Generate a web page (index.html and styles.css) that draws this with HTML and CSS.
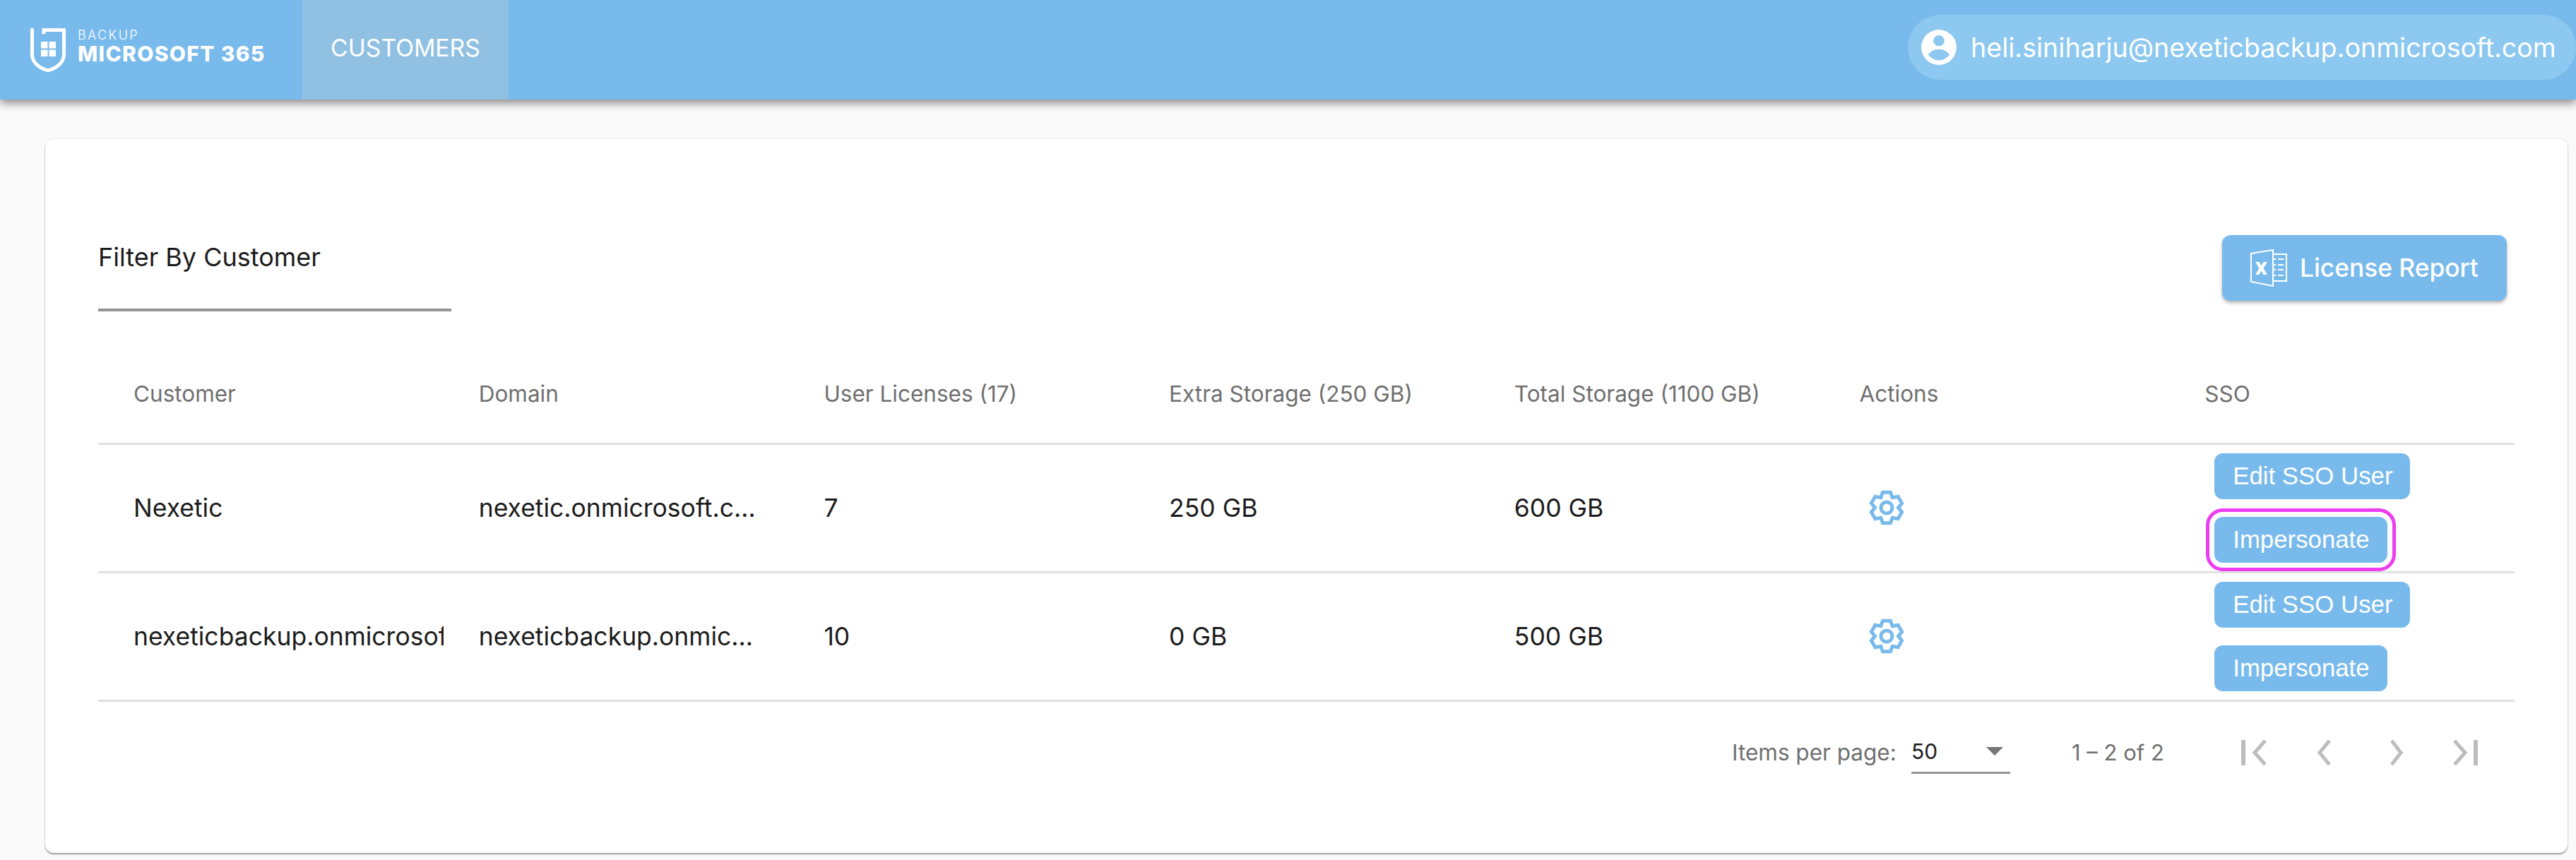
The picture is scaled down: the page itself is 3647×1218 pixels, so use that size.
FILE: index.html
```html
<!DOCTYPE html>
<html lang="en">
<head>
<meta charset="utf-8">
<title>Backup Microsoft 365 - Customers</title>
<link rel="stylesheet" href="styles.css">
</head>
<body>
<header class="topbar">
  <div class="brand">
    <svg class="shield" viewBox="0 0 52 62" aria-hidden="true">
      <path d="M3.500 0V37C3.500 46 10 55 26 60C42 55 48.500 46 48.500 37V2.500H20V8" fill="none" stroke="#fff" stroke-width="5"/>
      <path d="M16 19h9.500v9.500H16zM27.500 19H37v9.500h-9.500zM16 30.500h9.500V40H16zM27.500 30.500H37V40h-9.500z" fill="#fff"/>
    </svg>
    <div class="brand-text">
      <span class="brand-small">BACKUP</span>
      <span class="brand-big">MICROSOFT 365</span>
    </div>
  </div>
  <nav class="tab">CUSTOMERS</nav>
  <div class="user">
    <svg class="user-icon" viewBox="0 0 24 24" aria-hidden="true"><path fill="#fff" fill-rule="evenodd" d="M12 0a12 12 0 1 1 0 24a12 12 0 0 1 0-24zm0 3.800a3.700 3.700 0 1 0 0 7.400a3.700 3.700 0 0 0 0-7.400zM12 13.300c-2.900 0-5.500 1.300-7.200 3.700c1.700 2.400 4.300 3.800 7.200 3.800s5.500-1.400 7.200-3.800c-1.700-2.400-4.300-3.700-7.200-3.700z"/></svg>
    <span>heli.siniharju@nexeticbackup.onmicrosoft.com</span>
  </div>
</header>
<main class="card">
  <div class="toolbar">
    <div class="filter">Filter By Customer</div>
    <button class="report">
      <svg class="xls" viewBox="0 0 52 53" aria-hidden="true">
        <path d="M1 6L32 1V52L1 46Z" fill="none" stroke="#fff" stroke-width="2"/>
        <path d="M32 7H51V45H32" fill="none" stroke="#fff" stroke-width="2"/>
        <path d="M32 14h4M39 14h8M32 22h4M39 22h8M32 29h4M39 29h8M32 37h4M39 37h8" stroke="#fff" stroke-width="2"/>
        <path d="M7 18h5.500l3 5.500l3-5.500H24l-5.500 9l5.500 9h-5.500l-3-5.500l-3 5.500H7l5.500-9z" fill="#fff"/>
      </svg>
      <span>License Report</span>
    </button>
  </div>
  <table class="grid">
    <thead>
      <tr>
        <th>Customer</th><th>Domain</th><th>User Licenses (17)</th><th>Extra Storage (250 GB)</th><th>Total Storage (1100 GB)</th><th>Actions</th><th>SSO</th>
      </tr>
    </thead>
    <tbody>
      <tr>
        <td><div class="clip">Nexetic</div></td>
        <td><div class="ellipsis">nexetic.onmicrosoft.com</div></td>
        <td>7</td><td>250 GB</td><td>600 GB</td>
        <td><svg class="gear" viewBox="0 0 50 50" aria-hidden="true"><use href="#gear"/></svg></td>
        <td class="sso"><button class="btn">Edit SSO User</button><button class="btn ringed">Impersonate</button></td>
      </tr>
      <tr>
        <td><div class="clip">nexeticbackup.onmicrosoft.com</div></td>
        <td><div class="ellipsis">nexeticbackup.onmicrosoft.com</div></td>
        <td>10</td><td>0 GB</td><td>500 GB</td>
        <td><svg class="gear" viewBox="0 0 50 50" aria-hidden="true"><use href="#gear"/></svg></td>
        <td class="sso"><button class="btn">Edit SSO User</button><button class="btn">Impersonate</button></td>
      </tr>
    </tbody>
  </table>
  <footer class="pager">
    <span class="pager-label">Items per page:</span>
    <div class="select"><span>50</span><i class="caret"></i></div>
    <span class="range">1 – 2 of 2</span>
    <div class="pg-group">
      <svg class="pg" viewBox="0 0 40 36" aria-hidden="true"><path d="M4 0V36" stroke-width="6"/><path d="M35 1L20 18L35 35" stroke-width="5"/></svg>
      <svg class="pg" viewBox="0 0 40 36" aria-hidden="true"><path d="M26 1L12 18L26 35" stroke-width="5"/></svg>
      <svg class="pg" viewBox="0 0 40 36" aria-hidden="true"><path d="M14 1L27 18L14 35" stroke-width="5"/></svg>
      <svg class="pg" viewBox="0 0 40 36" aria-hidden="true"><path d="M33 0V36" stroke-width="6"/><path d="M3 1L18 18L3 35" stroke-width="5"/></svg>
    </div>
  </footer>
</main>
<svg class="defs" aria-hidden="true">
  <symbol id="gear" viewBox="0 0 50 50">
    <path fill="none" stroke="#78baec" stroke-width="5" stroke-linejoin="miter" d="M19.560 3.170H30.440L33.250 10.710L41.180 9.360L46.630 18.800L41.500 25L46.630 31.200L41.180 40.640L33.250 39.290L30.440 46.830H19.560L16.750 39.290L8.820 40.640L3.370 31.200L8.500 25L3.370 18.800L8.820 9.360L16.750 10.710Z"/>
    <circle cx="25" cy="25" r="8" fill="none" stroke="#78baec" stroke-width="5"/>
  </symbol>
</svg>
</body>
</html>
```

FILE: styles.css
```css
* { box-sizing: border-box; }
html, body { margin: 0; height: 100%; }
body {
  background: #fafafa;
  font-family: "Inter", "Noto Sans", sans-serif;
  color: #1b1b1b;
  overflow: hidden;
}
.topbar {
  height: 141px;
  background: #78baec;
  display: flex;
  align-items: stretch;
  box-shadow: 0 5px 12px rgba(0,0,0,.45);
  position: relative;
  color: #fff;
}
.brand {
  width: 428px;
  padding-left: 42px;
  display: flex;
  align-items: center;
  gap: 16px;
}
.shield { width: 52px; height: 62px; display: block; }
.brand-text { display: flex; flex-direction: column; line-height: 1; margin-top: -10px; }
.brand-small { font-size: 18px; font-weight: 300; letter-spacing: 2.400px; }
.brand-big { font-size: 30px; font-weight: 800; letter-spacing: 1.300px; margin-top: 2px; white-space: nowrap; }
.tab {
  width: 292px;
  background: #90c0e2;
  display: flex;
  align-items: center;
  justify-content: center;
  font-size: 33.700px;
  font-weight: 400;
  padding-bottom: 6px;
}
.user {
  margin-left: auto;
  margin-top: 21px;
  height: 92px;
  width: 946px;
  background: #8cc8ef;
  border-radius: 46px;
  display: flex;
  align-items: center;
  padding-left: 19px;
  gap: 20px;
  font-size: 37.600px;
  white-space: nowrap;
}
.user-icon { width: 50px; height: 50px; flex: none; }
.card {
  margin: 56px 12px 0 64px;
  height: 1011px;
  background: #fff;
  border-radius: 12px;
  box-shadow: 0 2px 2px rgba(0,0,0,.35), 0 0 3px rgba(0,0,0,.12);
  padding: 136px 75px 0;
}
.toolbar {
  display: flex;
  justify-content: space-between;
  align-items: flex-start;
  height: 159px;
}
.filter {
  width: 500px;
  height: 102px;
  border-bottom: 4px solid #949494;
  font-size: 36px;
  line-height: 50px;
  margin-top: 6px;
}
.report {
  width: 403px;
  height: 93px;
  margin-right: 11px;
  background: #78baec;
  color: #fff;
  border: 0;
  border-radius: 12px;
  box-shadow: 0 3px 5px rgba(0,0,0,.3);
  display: flex;
  align-items: center;
  gap: 18px;
  padding: 0 0 0 40px;
  font: 500 35.300px "Inter", sans-serif;
}
.xls { width: 52px; height: 53px; flex: none; }
.grid {
  border-collapse: collapse;
  table-layout: fixed;
  width: 3421px;
}
.grid th, .grid td { text-align: left; padding: 0 0 0 50px; border-bottom: 3px solid #e0e0e0; }
.grid th {
  font-size: 31.500px;
  font-weight: 400;
  color: #6f6f6f;
  height: 136px;
  padding-bottom: 4px;
}
.grid td { font-size: 35.500px; height: 182px; }
.grid td:first-child .clip { width: 439px; overflow: hidden; white-space: nowrap; }
.ellipsis { width: 398px; overflow: hidden; white-space: nowrap; text-overflow: ellipsis; }
.gear { width: 50px; height: 50px; display: block; margin-left: 13px; }
.defs { position: absolute; width: 0; height: 0; }
.grid td.sso { padding-left: 64px; }
.sso .btn { display: block; }
.btn {
  height: 65px;
  padding: 0 25px 0 26px;
  background: #78baec;
  color: #fff;
  border: 0;
  border-radius: 12px;
  font: 34.800px "Liberation Sans", Arial, sans-serif;
}
.btn + .btn { margin-top: 25px; }
.ringed { outline: 5px solid #ec3ef0; outline-offset: 7px; }
.pager {
  margin-top: 42px;
  padding-right: 48px;
  display: flex;
  justify-content: flex-end;
  align-items: center;
  height: 60px;
  font-size: 31px;
  color: #6f6f6f;
}
.pager-label { width: 254px; font-size: 31.500px; white-space: nowrap; }
.select {
  width: 140px;
  height: 60px;
  display: flex;
  align-items: center;
  justify-content: space-between;
  border-bottom: 3px solid #949494;
  color: #1b1b1b;
  font-size: 30px;
  padding-right: 10px;
}
.caret {
  width: 0; height: 0;
  border-left: 12px solid transparent;
  border-right: 12px solid transparent;
  border-top: 12px solid #757575;
}
.range { margin-left: 87px; width: 239px; white-space: nowrap; }
.pg-group { display: flex; gap: 60px; }
.pg { width: 40px; height: 36px; fill: none; stroke: #bdbdbd; }
```
